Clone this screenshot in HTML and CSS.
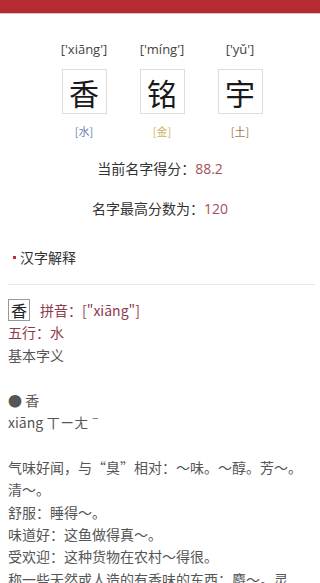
FILE: index.html
```html
<!DOCTYPE html>
<html lang="zh">
<head>
<meta charset="utf-8">
<link rel="stylesheet" href="styles.css">
</head>
<body>
<div class="topbar"></div>
<div class="names">
  <div class="col">
    <div class="py">['xiāng']</div>
    <div class="box">香</div>
    <div class="el water">[水]</div>
  </div>
  <div class="col">
    <div class="py">['míng']</div>
    <div class="box">铭</div>
    <div class="el metal">[金]</div>
  </div>
  <div class="col">
    <div class="py">['yǔ']</div>
    <div class="box">宇</div>
    <div class="el earth">[土]</div>
  </div>
</div>
<div class="score">当前名字得分：<span class="num">88.2</span></div>
<div class="score second">名字最高分数为：<span class="num">120</span></div>
<div class="section"><span class="dot"></span>汉字解释</div>
<div class="content">
  <div class="line"><span class="mini">香</span><span class="red pinyin">拼音：["xiāng"]</span></div>
  <div class="line red">五行：水</div>
  <div class="line">基本字义</div>
  <div class="line blank"></div>
  <div class="line">● 香</div>
  <div class="line">xiāng ㄒㄧㄤˉ</div>
  <div class="line blank"></div>
  <div class="line">气味好闻，与“臭”相对：～味。～醇。芳～。清～。</div>
  <div class="line">舒服：睡得～。</div>
  <div class="line">味道好：这鱼做得真～。</div>
  <div class="line">受欢迎：这种货物在农村～得很。</div>
  <div class="line">称一些天然或人造的有香味的东西：麝～。灵～。</div>
</div>
</body>
</html>
```
FILE: styles.css
```css
html, body {
  margin: 0;
  padding: 0;
  background: #fff;
  font-family: "Noto Sans CJK SC", "Noto Sans", sans-serif;
  overflow: hidden;
}
.topbar {
  height: 13px;
  background: #b52b33;
  border-bottom: 1px solid #dcc3b3;
}
.names {
  display: grid;
  grid-template-columns: repeat(3, 78px);
  justify-content: center;
  padding-left: 4px;
  padding-top: 26px;
}
.col {
  display: flex;
  flex-direction: column;
  align-items: center;
}
.py {
  font-family: "Open Sans", "Noto Sans", sans-serif;
  font-size: 13px;
  line-height: 18px;
  color: #444;
}
.box {
  margin-top: 11px;
  width: 43px;
  height: 43px;
  border: 1px solid #ddd;
  display: flex;
  align-items: center;
  justify-content: center;
  font-size: 30px;
  color: #1a1a1a;
  line-height: 1;
}
.el {
  margin-top: 9px;
  font-size: 11px;
  line-height: 16px;
}
.water { color: #6582b0; }
.metal { color: #c9b65e; }
.earth { color: #a57a48; }
.score {
  margin-top: 19px;
  text-align: center;
  font-size: 14px;
  line-height: 20px;
  color: #333;
}
.score .num {
  font-family: "Open Sans", "Noto Sans", sans-serif;
  color: #a3505a;
}
.section {
  margin: 28px 5px 0 8px;
  padding: 0 0 17px 5px;
  font-size: 14px;
  line-height: 20px;
  color: #333;
  display: flex;
  align-items: center;
  border-bottom: 1px solid #e8e8e8;
}
.dot {
  width: 3px;
  height: 3px;
  background: #c0303a;
  margin-right: 4px;
}
.content {
  padding: 12px 8px 0 8px;
  font-size: 14px;
  line-height: 22.4px;
  color: #555;
}
.line.blank { height: 22.4px; }
.red { color: #8e3a4a; }
.mini {
  display: inline-block;
  border: 1px solid #999;
  font-size: 16px;
  line-height: 20px;
  padding: 0 2px;
  color: #222;
  margin-right: 10px;
  vertical-align: middle;
}
.pinyin { vertical-align: middle; }
```
